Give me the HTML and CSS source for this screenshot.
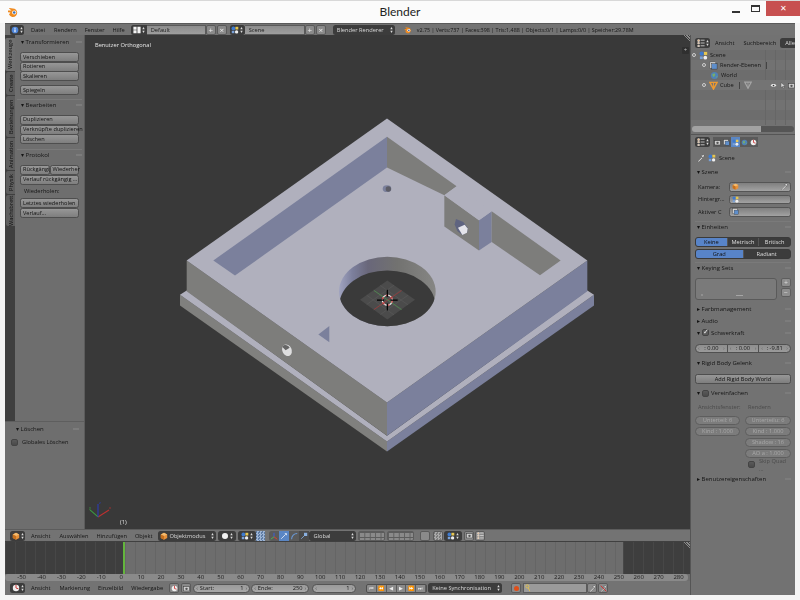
FILE: index.html
```html
<!DOCTYPE html>
<html lang="de">
<head>
<meta charset="utf-8">
<title>Blender</title>
<link rel="stylesheet" href="styles.css">
</head>
<body>
<svg class="defs" width="0" height="0" aria-hidden="true">
  <defs>
    <symbol id="i-scene" viewBox="0 0 10 10"><circle cx="3" cy="3" r="2.4" fill="#3d7ad0"/><rect x="5.5" y="1" width="3.6" height="3.4" fill="#e6c650"/><circle cx="7" cy="7.4" r="2.1" fill="#eee"/><rect x="1" y="6" width="3.2" height="3" fill="#7aa2d8"/></symbol>
    <symbol id="i-cube" viewBox="0 0 10 10"><path d="M5 1 9 3v4.6L5 9.6 1 7.6V3z" fill="#e8923a"/><path d="M5 5 9 3 5 1 1 3z" fill="#f4bc70"/><path d="M5 5v4.6L1 7.6V3z" fill="#c4701f"/></symbol>
    <symbol id="i-tri" viewBox="0 0 10 10"><path d="M1 1.500h8L5 9z" fill="none" stroke="#ef9a30" stroke-width="1.600"/><path d="M5 1.500V9" stroke="#ef9a30"/></symbol>
    <symbol id="i-info" viewBox="0 0 10 10"><circle cx="5" cy="5" r="4.2" fill="#4d84d8"/><rect x="4.3" y="4.2" width="1.4" height="3.6" fill="#fff"/><rect x="4.3" y="2.2" width="1.4" height="1.3" fill="#fff"/></symbol>
    <symbol id="i-updown" viewBox="0 0 4 10"><path d="M2 1 3.6 4H.4zM2 9 .4 6h3.2z" fill="#ddd"/></symbol>
    <symbol id="i-grid" viewBox="0 0 10 10"><path d="M.5 1h4v3.6h-4zM5.5 1h4v8h-4zM.5 5.4h4V9h-4z" fill="#f4f4f4"/></symbol>
    <symbol id="i-clock" viewBox="0 0 10 10"><circle cx="5" cy="5" r="4" fill="#eee"/><path d="M5 1v4l3 1" stroke="#c33" stroke-width="1.2" fill="none"/></symbol>
    <symbol id="i-sphere" viewBox="0 0 10 10"><circle cx="5" cy="5" r="3.8" fill="#f2f2f2"/></symbol>
    <symbol id="i-logo" viewBox="0 0 12 12"><path d="M1 4.5h3.5L2 2.6l.6-.6 5 .8a4.3 4.3 0 1 1-5.6 5.8l1.4-2-2.4-.4z" fill="#ef8a1f"/><circle cx="7.2" cy="6.5" r="2.1" fill="#fff"/><circle cx="7.2" cy="6.5" r="1.3" fill="#3b6fb5"/></symbol>
    <symbol id="i-outliner" viewBox="0 0 10 10"><path d="M1 1h2v2H1zM1 4.5h2v1.5H1zM1 8h2v1.5H1zM4.5 1.5h5M4.5 5h5M4.5 8.5h5" stroke="#eee" stroke-width=".9" fill="#e8923a"/></symbol>
    <symbol id="i-world" viewBox="0 0 10 10"><circle cx="5" cy="5" r="4" fill="#4f82b8"/><path d="M2.5 3.5 5 2.5 6 4.5 4 7 3 5.5zM7 6l1.4-.8L7.4 8z" fill="#79ad6a"/></symbol>
    <symbol id="i-layers" viewBox="0 0 10 10"><rect x="1" y="1" width="6.5" height="7" fill="#d8d8d8" stroke="#444" stroke-width=".5"/><rect x="3" y="3" width="6" height="6" fill="#5e8ecb" stroke="#333" stroke-width=".5"/></symbol>
    <symbol id="i-eye" viewBox="0 0 10 10"><path d="M.8 5C3 2.2 7 2.2 9.2 5 7 7.6 3 7.6.8 5z" fill="#e8e8e8"/><circle cx="5" cy="5" r="1.2" fill="#333"/></symbol>
    <symbol id="i-arrow" viewBox="0 0 10 10"><path d="M3 1v7l2-1.8L6.400 9l1-.5-1.300-2.700h2.500z" fill="#ddd" stroke="#333" stroke-width=".4"/></symbol>
    <symbol id="i-cam" viewBox="0 0 10 10"><rect x="1" y="2.500" width="8" height="6" fill="#ccc" stroke="#333" stroke-width=".6"/><circle cx="5" cy="5.500" r="1.700" fill="#555"/></symbol>
    <symbol id="i-pick" viewBox="0 0 10 10"><path d="M1 9 6 4l1 1-5 5zM6 2l2-1 1 1-1 2 0 1-3-3z" fill="#eee" stroke="#333" stroke-width=".4"/></symbol>
    <symbol id="i-nopick" viewBox="0 0 10 10"><path d="M1 9 6 4l1 1-5 5zM6 2l2-1 1 1-1 2 0 1-3-3z" fill="#ddd" stroke="#333" stroke-width=".4"/><path d="M1 1 9 9" stroke="#d03030" stroke-width="1.400"/></symbol>
    <symbol id="i-key" viewBox="0 0 10 10"><circle cx="3" cy="3" r="2" fill="none" stroke="#e0c050" stroke-width="1.200"/><path d="M4 4.500 6 9" stroke="#e0c050" stroke-width="1.200"/></symbol>
    <symbol id="i-axes" viewBox="0 0 10 10"><path d="M5 6V1" stroke="#3a5fe0" stroke-width="1.200"/><path d="M5 6 9 9" stroke="#e04030" stroke-width="1.200"/><path d="M5 6 1 9" stroke="#50b050" stroke-width="1.200"/></symbol>
    <symbol id="i-move" viewBox="0 0 10 10"><path d="M1.500 8.500 7 3" stroke="#eaf0fa" stroke-width="1"/><path d="M5.500 1.500h3v3z" fill="#eaf0fa"/></symbol>
    <symbol id="i-arc" viewBox="0 0 10 10"><path d="M2 9C2 5 5 2 9 2" stroke="#6a9ad8" stroke-width="1.300" fill="none"/></symbol>
    <symbol id="i-scale" viewBox="0 0 10 10"><path d="M1.500 8.500 6.500 3.500" stroke="#8ab0e0" stroke-width="1"/><path d="M5 1h4v4H5z" fill="#8ab0e0"/></symbol>
  </defs>
</svg>

<div class="window">
  <div class="titlebar">
    <svg class="logo"><use href="#i-logo"/></svg>
    <span class="title">Blender</span>
    <div class="winbtns">
      <span class="win-min"></span>
      <span class="win-max"></span>
      <span class="win-close">✕</span>
    </div>
  </div>

  <div class="app">
    <header class="hdr hdr-top">
      <span class="dark w14"><svg class="ic"><use href="#i-info"/></svg><svg class="ud"><use href="#i-updown"/></svg></span>
      <span class="menu m-datei">Datei</span><span class="menu m-rendern">Rendern</span><span class="menu m-fenster">Fenster</span><span class="menu m-hilfe">Hilfe</span>
      <span class="dark w16 gap-layout"><svg class="ic"><use href="#i-grid"/></svg><svg class="ud"><use href="#i-updown"/></svg></span>
      <span class="field w59">Default</span>
      <span class="sq">+</span><span class="sq">×</span>
      <span class="dark w15 gap2"><svg class="ic"><use href="#i-scene"/></svg><svg class="ud"><use href="#i-updown"/></svg></span>
      <span class="field w60">Scene</span>
      <span class="sq">+</span><span class="sq">×</span>
      <span class="dark w62 gap-render">Blender Renderer<svg class="ud push"><use href="#i-updown"/></svg></span>
      <svg class="ic gap-stat"><use href="#i-logo"/></svg>
      <span class="stats">v2.75 | Verts:737 | Faces:398 | Tris:1,488 | Objects:0/1 | Lamps:0/0 | Speicher:29.78M</span>
    </header>

    <div class="body">
      <div class="left">
        <div class="upper">
          <aside class="shelf">
            <div class="tabs-panels">
              <nav class="tabs">
                <span class="tab tab-on t-werk">Werkzeuge</span>
                <span class="tab t-create">Create</span>
                <span class="tab t-bez">Beziehungen</span>
                <span class="tab t-ani">Animation</span>
                <span class="tab t-phy">Physik</span>
                <span class="tab t-wach">Wachsbrett</span>
              </nav>
              <div class="tools">
                <div class="phead">▾ Transformieren<i class="grip"></i></div>
                <div class="group g-first">
                  <button class="btn">Verschieben</button>
                  <button class="btn">Rotieren</button>
                  <button class="btn">Skalieren</button>
                </div>
                <div class="group g-mirror"><button class="btn">Spiegeln</button></div>
                <div class="phead ph-b">▾ Bearbeiten<i class="grip"></i></div>
                <div class="group g-next">
                  <button class="btn">Duplizieren</button>
                  <button class="btn">Verknüpfte duplizieren</button>
                  <button class="btn">Löschen</button>
                </div>
                <div class="phead ph-p">▾ Protokol<i class="grip"></i></div>
                <div class="group g-proto">
                  <div class="pair"><button class="btn">Rückgängig</button><button class="btn">Wiederher</button></div>
                  <button class="btn">Verlauf rückgängig ...</button>
                </div>
                <div class="sublabel">Wiederholen:</div>
                <div class="group">
                  <button class="btn">Letztes wiederholen</button>
                  <button class="btn">Verlauf...</button>
                </div>
              </div>
            </div>
            <div class="opanel">
              <div class="phead ph-op">▾ Löschen<i class="grip"></i></div>
              <label class="check-row"><span class="check"></span>Globales Löschen</label>
            </div>
          </aside>

          <main class="viewport">
            <svg class="scene" viewBox="85 35 605 493" preserveAspectRatio="none">
              <defs>
                <linearGradient id="holeWall" x1="0" x2="1" y1="0" y2="0">
                  <stop offset="0" stop-color="#a1a4c0"/>
                  <stop offset=".14" stop-color="#7c7f9c"/>
                  <stop offset=".3" stop-color="#69677a"/>
                  <stop offset=".6" stop-color="#727270"/>
                  <stop offset="1" stop-color="#868684"/>
                </linearGradient>
                <clipPath id="holeClip"><ellipse cx="652" cy="543" rx="145" ry="104"/></clipPath>
              </defs>
              <g transform="translate(170 110) scale(.33333)">
                <path d="M30 553 651 992V1022L30 585z" fill="#80807e"/>
                <path d="M1272 553 651 992V1022L1272 585z" fill="#7b809c"/>
                <path d="M50 540 30 553 651 992 1272 553 1252 540 651 975z" fill="#b0b0bd"/>
                <path d="M50 450 651 875V975L50 542z" fill="#7d7d7b"/>
                <path d="M1252 450 651 875V975L1252 542z" fill="#7b809c"/>
                <path d="M651 25 1252 450 651 875 50 450z" fill="#b0b0bd"/>
                <path d="M651 80 130 450 195 495 651 172z" fill="#7b809c"/>
                <path d="M651 80 860 228 823 255 651 172z" fill="#7d7d7b"/>
                <path d="M823 255 927 330V420L823 348z" fill="#7d7d7b"/>
                <path d="M927 330 965 303V395L927 420z" fill="#7b809c"/>
                <path d="M965 303 1172 450 1110 494 965 395z" fill="#7d7d7b"/>
                <path d="M823 255 860 228 965 303 927 330z" fill="#b0b0bd"/>
                <ellipse cx="651" cy="235" rx="13" ry="10" fill="#7b809c"/>
                <ellipse cx="655" cy="236" rx="8" ry="8" fill="#5d5d66"/>
                <path d="M858 326 880 335 893 352 892 366 877 374 862 362 854 342z" fill="#5f6480"/>
                <path d="M864 352 884 343 893 354 891 367 877 374z" fill="#e4e4ea"/>
                <ellipse cx="652" cy="543" rx="145" ry="104" fill="url(#holeWall)"/>
                <g clip-path="url(#holeClip)">
                  <ellipse cx="652" cy="584" rx="144" ry="104" fill="#3a3a3a"/>
                </g>
                <path d="M570 568 652 510 735 568 652 627z" fill="#4b4b4b"/>
                <path d="M590 554 672 613M611 539 693 598M631 525 714 583M590 582 672 524M611 598 693 539M631 612 714 554" stroke="#595959" stroke-width="2" fill="none"/>
                <path d="M612 597 695 540" stroke="#a33" stroke-width="2"/>
                <path d="M612 540 695 597" stroke="#4d9a4d" stroke-width="2"/>
                <circle cx="652" cy="569" r="15" fill="none" stroke="#eee" stroke-width="3.5"/>
                <circle cx="652" cy="569" r="15" fill="none" stroke="#c33" stroke-width="3.5" stroke-dasharray="8 8"/>
                <path d="M621 569H642M662 569H683M652 538V559M652 579V600" stroke="#000" stroke-width="3.500"/>
                <path d="M445 672 478 646V695z" fill="#7b809c"/>
                <ellipse cx="351" cy="719" rx="14" ry="18" fill="#dededf" transform="rotate(-25 351 719)"/>
                <path d="M337 709C341 701 353 701 359 711L347 719z" fill="#666"/>
              </g>
              <g class="axis" fill="none" stroke-width="1">
                <path d="M98 516 109 509" stroke="#c03030"/>
                <path d="M98 516 90 509" stroke="#3aa040"/>
                <path d="M98 516V503" stroke="#2a3cc0"/>
              </g>
              <g class="axis-lab">
                <text x="109" y="508" fill="#c03030">x</text>
                <text x="89" y="508" fill="#3aa040">y</text>
                <text x="99" y="503" fill="#2a3cc0">z</text>
              </g>
            </svg>
            <div class="vp-top">Benutzer Orthogonal</div>
            <div class="vp-frame">(1)</div>
            <span class="hatch"></span>
            <span class="nkey">+</span>
          </main>
        </div>

        <div class="hdr hdr-view">
          <span class="dark w15"><svg class="ic"><use href="#i-cube"/></svg><svg class="ud"><use href="#i-updown"/></svg></span>
          <span class="menu m-ans">Ansicht</span><span class="menu m-aus">Auswählen</span><span class="menu m-hin">Hinzufügen</span><span class="menu m-obj">Objekt</span>
          <span class="dark w58 gap-mode"><svg class="ic"><use href="#i-cube"/></svg>Objektmodus<svg class="ud push"><use href="#i-updown"/></svg></span>
          <span class="dark w18 gap2"><svg class="ic"><use href="#i-sphere"/></svg><svg class="ud"><use href="#i-updown"/></svg></span>
          <span class="dark w18 gap2"><svg class="ic"><use href="#i-scene"/></svg><svg class="ud"><use href="#i-updown"/></svg></span>
          <span class="mini sq-blue"></span>
          <span class="manip gap-man"><svg class="ic"><use href="#i-axes"/></svg></span><span class="manip manip-on"><svg class="ic"><use href="#i-move"/></svg></span><span class="manip"><svg class="ic"><use href="#i-arc"/></svg></span><span class="manip manip-blue"><svg class="ic"><use href="#i-scale"/></svg></span>
          <span class="dark w47">Global<svg class="ud push"><use href="#i-updown"/></svg></span>
          <span class="layers gap2"></span>
          <span class="layers gap2"></span>
          <span class="sq gap6"></span>
          <span class="sq gap2 sq-pat"></span>
          <span class="dark w18"><svg class="ic"><use href="#i-scene"/></svg><svg class="ud"><use href="#i-updown"/></svg></span>
          <span class="sq gap2"><svg class="ic"><use href="#i-cam"/></svg></span><span class="sq"><svg class="ic"><use href="#i-outliner"/></svg></span>
        </div>

        <div class="timeline">
          <div class="tl-before"></div>
          <div class="tl-range"></div>
          <div class="tl-after"></div>
          <span class="hatch"></span>
        </div>

        <div class="ruler">
          <span>-50</span><span>-40</span><span>-30</span><span>-20</span><span>-10</span><span>0</span><span>10</span><span>20</span><span>30</span><span>40</span><span>50</span><span>60</span><span>70</span><span>80</span><span>90</span><span>100</span><span>110</span><span>120</span><span>130</span><span>140</span><span>150</span><span>160</span><span>170</span><span>180</span><span>190</span><span>200</span><span>210</span><span>220</span><span>230</span><span>240</span><span>250</span><span>260</span><span>270</span><span>280</span>
        </div>

        <div class="hdr hdr-time">
          <span class="dark w15"><svg class="ic"><use href="#i-clock"/></svg><svg class="ud"><use href="#i-updown"/></svg></span>
          <span class="menu m-ans">Ansicht</span><span class="menu m-mark">Markierung</span><span class="menu m-einz">Einzelbild</span><span class="menu m-wied">Wiedergabe</span>
          <span class="sq gap-time"><svg class="ic"><use href="#i-clock"/></svg></span><span class="sq gap1"><svg class="ic"><use href="#i-cam"/></svg></span>
          <span class="num w57 gap1"><b>‹</b>Start:<em>1</em><b>›</b></span>
          <span class="num w58 gap1"><b>‹</b>Ende:<em>250</em><b>›</b></span>
          <span class="num w44 gap3"><b>‹</b><em>1</em><b>›</b></span>
          <span class="transport gap10"><i>⏮</i><i>⏪</i><i>◀</i><i>▶</i><i>⏩</i><i>⏭</i></span>
          <span class="dark w74 gap1">Keine Synchronisation<svg class="ud push"><use href="#i-updown"/></svg></span>
          <span class="sq gap9"><i class="rec"></i></span>
          <span class="keyfield gap1"><svg class="ic"><use href="#i-key"/></svg></span>
          <span class="sq"><svg class="ic"><use href="#i-pick"/></svg></span><span class="sq"><svg class="ic"><use href="#i-nopick"/></svg></span>
        </div>
      </div>

      <div class="right">
        <section class="outliner">
          <div class="ol-head">
            <span class="dark w15"><svg class="ic"><use href="#i-outliner"/></svg><svg class="ud"><use href="#i-updown"/></svg></span>
            <span class="menu ol-m1">Ansicht</span>
            <span class="menu ol-m2">Suchbereich</span>
            <span class="dark w-alle">Alle</span>
          </div>
          <div class="ol-rows">
            <div class="ol-row"><i class="exp"></i><svg class="ic ic-l"><use href="#i-scene"/></svg>Scene</div>
            <div class="ol-row ind1"><i class="exp"></i><svg class="ic ic-l"><use href="#i-layers"/></svg>Render-Ebenen<i class="bar"></i></div>
            <div class="ol-row ind2"><svg class="ic ic-l"><use href="#i-world"/></svg>World</div>
            <div class="ol-row ind1 sel"><i class="exp"></i><svg class="ic ic-l"><use href="#i-tri"/></svg>Cube<i class="bar"></i><svg class="ic ic-gh"><use href="#i-tri"/></svg><span class="ol-vis"><svg class="ic"><use href="#i-eye"/></svg><svg class="ic"><use href="#i-arrow"/></svg><svg class="ic"><use href="#i-cam"/></svg></span></div>
          </div>
          <div class="ol-scroll"><span></span></div>
        </section>

        <section class="props">
          <div class="pr-head">
            <span class="dark w15"><svg class="ic"><use href="#i-outliner"/></svg><svg class="ud"><use href="#i-updown"/></svg></span>
            <span class="tabsq gap3"><svg class="ic"><use href="#i-cam"/></svg></span><span class="tabsq"><svg class="ic"><use href="#i-layers"/></svg></span><span class="tabsq on"><svg class="ic"><use href="#i-scene"/></svg></span><span class="tabsq"><svg class="ic"><use href="#i-world"/></svg></span><span class="tabsq"><svg class="ic"><use href="#i-clock"/></svg></span>
          </div>
          <div class="crumb"><svg class="ic"><use href="#i-pick"/></svg><svg class="ic"><use href="#i-scene"/></svg>Scene</div>

          <div class="phead pr">▾ Szene<i class="grip"></i></div>
          <div class="frow fr-first"><label>Kamera:</label><span class="pick"><svg class="ic"><use href="#i-cube"/></svg><svg class="ic push"><use href="#i-pick"/></svg></span></div>
          <div class="frow"><label>Hintergr...</label><span class="pick"><svg class="ic"><use href="#i-scene"/></svg></span></div>
          <div class="frow"><label>Aktiver C</label><span class="pick"><svg class="ic"><use href="#i-layers"/></svg></span></div>

          <div class="phead pr ph-ein">▾ Einheiten<i class="grip"></i></div>
          <div class="seg seg-first"><span class="on">Keine</span><span>Metrisch</span><span>Britisch</span></div>
          <div class="seg seg-2"><span class="on">Grad</span><span>Radiant</span></div>

          <div class="phead pr ph-key">▾ Keying Sets<i class="grip"></i></div>
          <div class="keysets">
            <div class="klist"><i class="dot"></i><i class="dash"></i></div>
            <div class="kbtns"><span>+</span><span>−</span></div>
          </div>

          <div class="phead pr ph-far">▸ Farbmanagement<i class="grip"></i></div>
          <div class="phead pr">▸ Audio<i class="grip"></i></div>
          <div class="phead pr"><span>▾</span><span class="check check-on">✓</span>Schwerkraft<i class="grip"></i></div>
          <div class="nums nums-g"><span class="nf"><b>‹</b>:&nbsp;0.00<b>›</b></span><span class="nf"><b>‹</b>:&nbsp;0.00<b>›</b></span><span class="nf"><b>‹</b>:&nbsp;-9.81<b>›</b></span></div>

          <div class="phead pr ph-rig">▾ Rigid Body Gelenk<i class="grip"></i></div>
          <button class="btn add">Add Rigid Body World</button>

          <div class="phead pr ph-ver"><span>▾</span><span class="check"></span>Vereinfachen<i class="grip"></i></div>
          <div class="simp">
            <div class="col">
              <div class="slabel">Ansichtsfenster:</div>
              <span class="dis">Unterteil: 6</span>
              <span class="dis">Kind : 1.000</span>
            </div>
            <div class="col">
              <div class="slabel">Rendern</div>
              <span class="dis">Unterteilu: 6</span>
              <span class="dis">Kind : 1.000</span>
              <span class="dis">Shadow : 16</span>
              <span class="dis">AO a : 1.000</span>
              <label class="skip"><span class="check"></span>Skip Quad ...</label>
            </div>
          </div>

          <div class="phead pr ph-ben">▸ Benutzereigenschaften<i class="grip"></i></div>
        </section>
      </div>
    </div>
  </div>
</div>
</body>
</html>
```

FILE: styles.css
```css
* { box-sizing: border-box; }
html, body { margin: 0; padding: 0; }
body { width: 800px; height: 600px; overflow: hidden; background: #f1f1f1; font-family: "Open Sans", sans-serif; }
.defs { display: block; height: 0; }

.window { width: 800px; height: 600px; display: flex; flex-direction: column; padding: 0 5px 5px; background: #f4f4f4; }
.titlebar { height: 23px; flex: none; display: flex; align-items: center; position: relative; margin: 0 -5px; padding-left: 7px; background: #fbfbfb; border-top: 1px solid #d8d8d8; }
.logo { width: 12px; height: 12px; }
.title { position: absolute; left: 0; right: 0; text-align: center; top: 3px; font: 12px Lato, sans-serif; color: #222; }
.winbtns { margin-left: auto; display: flex; align-self: flex-start; }
.win-min { width: 8px; height: 2px; background: #333; margin: 10px 11px 0 0; }
.win-max { width: 9px; height: 7px; border: 1px solid #333; border-top-width: 2px; margin: 4px 6px 0 0; }
.win-close { width: 34px; height: 15px; background: #c75050; color: #fff; font-size: 8px; text-align: center; line-height: 14px; }

.app { flex: 1; min-height: 0; display: flex; flex-direction: column; background: #6e6e6e; color: #161616; font-size: 5.7px; filter: blur(.35px); overflow: hidden; }
.hdr { flex: none; display: flex; align-items: center; background: #737373; padding-left: 5px; white-space: nowrap; }
.hdr-top { height: 12px; border-top: 1px solid #5a5a5a; }
.hdr-view { height: 13px; border-top: 1px solid #5c5c5c; border-bottom: 1px solid #404040; }
.hdr-time { height: 14px; }

.dark { height: 10px; display: inline-flex; align-items: center; justify-content: center; gap: 1px; padding: 0 2px; background: #3c3c3c; color: #d8d8d8; border-radius: 2.5px; flex: none; }
.menu { flex: none; }
.ic { width: 8px; height: 8px; flex: none; }
.ud { width: 3px; height: 8px; flex: none; }
.push { margin-left: auto; }
.w14 { width: 14px; } .w15 { width: 15px; } .w16 { width: 16px; } .w18 { width: 18px; }
.w47 { width: 47px; justify-content: flex-start; padding-left: 4px; }
.w58 { width: 58px; } .w57 { width: 57px; } .w44 { width: 44px; } .w74 { width: 74px; justify-content: flex-start; padding-left: 4px; }
.w62 { width: 62px; justify-content: flex-start; padding-left: 4px; }
.w59 { width: 59px; } .w60 { width: 60px; }
.hdr .w58.dark { justify-content: flex-start; padding-left: 2px; }

.m-datei { margin-left: 7px; }
.m-rendern { margin-left: 9px; }
.m-fenster { margin-left: 8px; }
.m-hilfe { margin-left: 8px; }
.gap-layout { margin-left: 6px; border-radius: 2.5px 0 0 2.5px; }
.gap2 { margin-left: 2px; }
.gap1 { margin-left: 1px; }
.gap3 { margin-left: 3px; }
.gap6 { margin-left: 6px; }
.gap9 { margin-left: 9px; }
.gap10 { margin-left: 10px; }
.gap-render { margin-left: 6px; }
.gap-stat { margin-left: 9px; }
.stats { margin-left: 5px; font-size: 5.4px; }

.field { height: 10px; display: inline-flex; align-items: center; padding-left: 4px; background: linear-gradient(#8c8c8c, #9e9e9e); color: #1c1c1c; border: 1px solid #5a5a5a; border-width: 1px 1px 1px 0; flex: none; }
.sq { width: 10px; height: 10px; margin-right: 1px; display: inline-flex; align-items: center; justify-content: center; font-size: 8px; line-height: 1; color: #eee; background: #8a8a8a; border: 1px solid #5a5a5a; border-radius: 2px; flex: none; }
.sq .ic { width: 7px; height: 7px; }

.body { flex: 1; min-height: 0; display: flex; }
.left { width: 685px; flex: none; display: flex; flex-direction: column; }
.upper { flex: 1; min-height: 0; display: flex; }

.shelf { width: 80px; flex: none; display: flex; flex-direction: column; background: #6e6e6e; border-right: 1px solid #5c5c5c; }
.tabs-panels { flex: 1; min-height: 0; display: flex; }
.tabs { width: 10px; flex: none; display: flex; flex-direction: column; background: #3f3f3f; padding-top: 3px; gap: 1px; }
.tab { writing-mode: vertical-rl; transform: rotate(180deg); display: flex; align-items: center; justify-content: center; background: #5e5e5e; border-radius: 0 2px 2px 0; color: #101010; width: 9px; margin-left: 1px; font-size: 5.7px; }
.tab-on { background: #707070; width: 10px; margin-left: 0; }
.t-werk { height: 33px; } .t-create { height: 23px; } .t-bez { height: 41px; } .t-ani { height: 32px; } .t-phy { height: 23px; } .t-wach { height: 31px; }
.tools { flex: 1; min-width: 0; padding: 1px 5px 0; }

.phead { height: 12px; display: flex; align-items: center; font-size: 6px; color: #151515; position: relative; gap: 2px; white-space: nowrap; }
.grip { width: 6px; height: 2px; margin-left: auto; border-top: 1px solid #7c7c7c; border-bottom: 1px solid #7c7c7c; }
.tools .phead { padding-left: 4px; margin: 0 -3px; }
.group { display: flex; flex-direction: column; }
.g-first { margin-top: 4px; }
.g-mirror { margin-top: 4px; }
.tools .ph-b { margin-top: 4px; border-top: 1px solid #7a7a7a; }
.g-next { margin-top: 4px; }
.tools .ph-p { margin-top: 5px; border-top: 1px solid #7a7a7a; }
.g-proto { margin-top: 4px; }
.sublabel { height: 14px; display: flex; align-items: center; padding-left: 4px; }
.btn { height: 10px; margin: 0 0 -0.3px; padding: 0 2px; text-align: left; font: 5.6px "Open Sans", sans-serif; color: #111; background: linear-gradient(#979797, #7e7e7e); border: 1px solid #4e4e4e; border-radius: 2.5px; white-space: nowrap; display: block; width: 100%; line-height: 7px; }
.pair { display: flex; }
.pair .btn { flex: 1; min-width: 0; }

.opanel { height: 108px; flex: none; padding: 1px 5px 0; background: #6e6e6e; border-top: 1px solid #5e5e5e; }
.ph-op { padding-left: 6px; margin-top: 0; }
.check-row { display: flex; align-items: center; gap: 4px; margin-top: 3px; padding-left: 1px; }
.check { width: 7px; height: 7px; background: linear-gradient(#5a5a5a, #4a4a4a); border: 1px solid #444; border-radius: 2px; flex: none; display: inline-block; }
.check-on { color: #eee; font: 7px/5px "DejaVu Sans", sans-serif; text-align: center; background: #5a5a5a; }

.viewport { flex: 1; min-width: 0; position: relative; background: #393939; }
.scene { position: absolute; inset: 0; width: 100%; height: 100%; }
.axis-lab { font: 4px "Open Sans", sans-serif; }
.vp-top { padding: 6px 0 0 10px; color: #e6e6e6; position: relative; }
.vp-frame { position: absolute; left: 35px; bottom: 3px; color: #e6e6e6; }
.hatch { position: absolute; right: 0; top: 0; width: 7px; height: 7px; background: repeating-linear-gradient(45deg, transparent 0 1px, #8a8a8a 1px 2px); clip-path: polygon(100% 100%, 0 0, 100% 0); }
.nkey { position: absolute; right: 1px; top: 12px; width: 7px; height: 7px; background: #2f2f2f; color: #bbb; font-size: 6px; line-height: 7px; text-align: center; border-radius: 1px; }

.m-ans { margin-left: 6px; }
.m-aus { margin-left: 9px; }
.m-hin { margin-left: 8px; }
.m-obj { margin-left: 8px; }
.gap-mode { margin-left: 6px; }
.mini { width: 9px; height: 10px; flex: none; }
.sq-blue { background: repeating-conic-gradient(#9db4d4 0 25%, #5d7ba4 0 50%) 0 0 / 3px 3px; }
.manip { width: 10px; height: 10px; display: inline-flex; align-items: center; justify-content: center; background: #5a5a5a; flex: none; }
.manip-on { background: #5a86c4; }
.manip-blue { background: #4a4a4a; }
.gap-man { margin-left: 4px; border-radius: 2.5px 0 0 2.5px; }
.layers { width: 27px; height: 10px; flex: none; background: #8a8a8a; background-image: linear-gradient(90deg, #5c5c5c 1px, transparent 1px), linear-gradient(#5c5c5c 1px, transparent 1px); background-size: 5.4px 5px; border: 1px solid #5c5c5c; border-radius: 2px; }
.sq-pat { background: repeating-conic-gradient(#a8a8a8 0 25%, #7a7a7a 0 50%) 0 0 / 3px 3px; }

.timeline { height: 32px; flex: none; display: flex; position: relative; background: #3e3e3e; }
.tl-before, .tl-after { background: #3e3e3e; background-image: repeating-linear-gradient(90deg, #474747 0 1px, transparent 1px 10px); }
.tl-before { width: 118px; }
.tl-after { flex: 1; }
.tl-range { width: 500px; background: #6d6d6d; background-image: repeating-linear-gradient(90deg, #656565 0 1px, transparent 1px 10px); border-left: 2px solid #63b53d; }
.ruler { height: 7px; flex: none; display: grid; grid-template-columns: repeat(34, 19.92px); padding-left: 6.7px; background: #8a8a8a; border-radius: 3px; margin-right: 2px; font-size: 6px; line-height: 7px; color: #202020; text-align: center; overflow: hidden; }

.m-mark { margin-left: 9px; }
.m-einz { margin-left: 8px; }
.m-wied { margin-left: 8px; }
.gap-time { margin-left: 6px; }
.num { height: 9px; flex: none; display: inline-flex; align-items: center; padding: 0 2px; border-radius: 5px; background: linear-gradient(#9a9a9a, #a8a8a8); border: 1px solid #555; color: #151515; }
.num b { font-weight: normal; color: #555; margin: 0 2px 0 0; }
.num em { margin-left: auto; font-style: normal; }
.num em + b { margin: 0 0 0 2px; }
.transport { display: inline-flex; flex: none; width: 61px; height: 9px; border: 1px solid #4e4e4e; border-radius: 2px; background: #8a8a8a; }
.transport i { flex: 1; font-style: normal; font-size: 5px; line-height: 7px; text-align: center; color: #eee; border-right: 1px solid #5a5a5a; font-family: "DejaVu Sans", sans-serif; }
.rec { width: 5px; height: 5px; border-radius: 50%; background: #e04e18; }
.keyfield { width: 64px; height: 10px; flex: none; background: #9a9a9a; border: 1px solid #5a5a5a; display: inline-flex; align-items: center; padding-left: 1px; }

.right { flex: 1; min-width: 0; display: flex; flex-direction: column; border-left: 1px solid #555; background: #727272; }
.outliner { height: 99px; flex: none; display: flex; flex-direction: column; }
.ol-head { height: 15px; flex: none; display: flex; align-items: center; padding-left: 4px; overflow: hidden; white-space: nowrap; }
.ol-m1 { margin-left: 5px; }
.ol-m2 { margin-left: 9px; }
.w-alle { width: 20px; flex: none; margin-left: 4px; }
.ol-rows { flex: 1; padding-top: 0; background: linear-gradient(90deg, transparent 74px, #666 74px 75px, transparent 75px 84px, #666 84px 85px, transparent 85px 94px, #666 94px 95px, transparent 95px), repeating-linear-gradient(#6d6d6d 0 10px, #727272 10px 20px); }
.ol-row { height: 10px; display: flex; align-items: center; gap: 1px; padding-left: 1px; position: relative; white-space: nowrap; }
.ind1 { padding-left: 11px; }
.ind2 { padding-left: 19px; }
.exp { width: 4px; height: 4px; border: 1px solid #cfcfcf; border-radius: 50%; margin-right: 2px; flex: none; }
.ic-l { width: 9px; height: 9px; margin-right: 1px; }
.ic-gh { opacity: .35; margin-left: 3px; filter: grayscale(1) brightness(1.6); }
.bar { width: 1px; height: 7px; background: #444; margin-left: 4px; flex: none; }
.sel { background: #747474; }
.ol-vis { margin-left: auto; display: flex; gap: 2px; padding-right: 0; }
.ol-vis .ic { width: 7px; height: 7px; }
.ol-scroll { height: 9px; flex: none; padding: 1px 1px 1px 1px; }
.ol-scroll span { display: block; height: 6px; background: linear-gradient(90deg, #a2a2a2 0 68%, #555 68%); border-radius: 3px; }

.props { flex: 1; min-height: 0; padding: 0 4px; overflow: hidden; border-top: 1px solid #555; }
.pr-head { height: 14px; display: flex; align-items: center; margin-left: 0; }
.tabsq { width: 9px; height: 10px; background: #5a5a5a; display: inline-flex; align-items: center; justify-content: center; flex: none; }
.tabsq.on { background: #5a86c4; }
.tabsq .ic { width: 7px; height: 7px; }
.crumb { height: 17px; display: flex; align-items: center; gap: 3px; padding-left: 2px; }
.phead.pr { padding-left: 2px; }
.frow { height: 12.5px; display: flex; align-items: center; }
.fr-first { margin-top: 2.5px; }
.frow label { width: 34px; flex: none; padding-left: 3px; }
.pick { flex: 1; height: 9.5px; display: flex; align-items: center; padding: 0 2px; background: linear-gradient(#7f7f7f, #a2a2a2); border: 1px solid #555; border-radius: 2.5px; }
.pick .ic { width: 7px; height: 7px; }
.seg { display: flex; height: 10px; background: #3c3c3c; border: 1px solid #3a3a3a; border-radius: 3px; overflow: hidden; color: #ddd; line-height: 8px; text-align: center; }
.seg span { flex: 1; border-left: 1px solid #555; }
.seg span:first-child { border-left: 0; }
.seg .on { background: #5884c8; color: #111; flex: 1; }
.seg-first { margin-top: 4px; }
.seg-2 { margin-top: 2px; }
.ph-ein { margin-top: 2.5px; border-top: 1px solid #7a7a7a; }
.ph-key { margin-top: 3px; border-top: 1px solid #7a7a7a; }
.keysets { display: flex; gap: 4px; margin-top: 4px; height: 22px; }
.klist { flex: 1; position: relative; background: #7a7a7a; border: 1px solid #5a5a5a; border-radius: 3px; }
.dot { position: absolute; left: 5px; bottom: 3px; width: 2px; height: 2px; border-radius: 50%; background: #999; }
.dash { position: absolute; left: 40px; bottom: 3px; width: 7px; height: 1px; background: #a6a6a6; }
.kbtns { width: 10px; display: flex; flex-direction: column; gap: 1px; }
.kbtns span { height: 9px; background: #8e8e8e; border: 1px solid #5e5e5e; border-radius: 2px; color: #ddd; font-size: 7px; line-height: 7px; text-align: center; }
.ph-far { margin-top: 3px; }
.nums { display: flex; height: 9.5px; border: 1px solid #505050; border-radius: 5px; overflow: hidden; background: linear-gradient(#8e8e8e, #9a9a9a); line-height: 7.5px; }
.nf { flex: 1; display: flex; justify-content: space-between; padding: 0 2px; border-left: 1px solid #505050; white-space: nowrap; }
.nf:first-child { border-left: 0; }
.nf b { font-weight: normal; color: #666; }
.nums-g { margin-top: 5px; }
.ph-rig { margin-top: 4px; }
.add { margin: 5px 0 0; text-align: center; }
.ph-ver { margin-top: 3px; }
.simp { display: grid; grid-template-columns: 45px 46px; gap: 5px; }
.col { display: flex; flex-direction: column; }
.slabel { height: 16.5px; display: flex; align-items: center; color: #4a4a4a; padding-left: 3px; }
.dis { height: 9px; margin-bottom: 2px; border: 1px solid #5e5e5e; border-radius: 5px; background: #7c7c7c; color: #a8a8a8; line-height: 7px; text-align: center; white-space: nowrap; }
.skip { display: flex; align-items: center; gap: 4px; color: #4c4c4c; padding-left: 3px; height: 10px; }
.ph-ben { margin-top: 3px; }
```
